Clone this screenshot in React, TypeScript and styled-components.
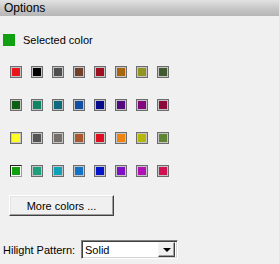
import React from "react";
import styled, { createGlobalStyle } from "styled-components";

const Global = createGlobalStyle`
  html, body { margin: 0; padding: 0; background: #f0f0f0; }
`;

const SWATCHES = [
  ["#e8161c", "#000000", "#4e4e4e", "#70402a", "#9c1022", "#a8640e", "#8f9422", "#405a30"],
  ["#0e5e12", "#128466", "#0e6a7c", "#1050a4", "#060c8c", "#520a7e", "#82087e", "#8c0a3a"],
  ["#ffff22", "#545454", "#76706a", "#a8582c", "#dc1020", "#ee8412", "#b4b80a", "#5e8434"],
  ["#10a010", "#1ea07e", "#10a2b8", "#1272c8", "#0414cc", "#8010c6", "#b012b8", "#d01050"],
];

/* 外框 */
const Panel = styled.div`
  width: 280px;
  height: 264px;
  background: #f0f0f0;
  font-family: "Liberation Sans", Arial, sans-serif;
  font-size: 11px;
  color: #000;
  box-sizing: border-box;
  border-right: 1px solid #e6e6e6;
  overflow: hidden;
`;

const Header = styled.div`
  height: 16px;
  line-height: 16px;
  padding-left: 4px;
  font-size: 12px;
  background: linear-gradient(180deg, #e2e2e2 0%, #c6c6c6 55%, #b6b6b6 100%);
`;

const SelectedRow = styled.div`
  display: flex;
  align-items: center;
  gap: 8px;
  margin: 18px 0 0 3px;
  height: 12px;
`;

const SelectedBox = styled.div<{ $c: string }>`
  width: 12px;
  height: 12px;
  background: ${(p) => p.$c};
`;

const Grid = styled.div`
  display: grid;
  grid-template-columns: repeat(8, 12px);
  column-gap: 9px;
  row-gap: 21px;
  margin: 20px 0 0 10px;
`;

const Swatch = styled.div<{ $c: string; $sel?: boolean }>`
  width: 12px;
  height: 12px;
  box-sizing: border-box;
  background: ${(p) => p.$c};
  border: 1px solid #6c6c6c;
  border-color: ${(p) => (p.$sel ? "#202020 #9a9a9a #9a9a9a #202020" : "#6c6c6c")};
  box-shadow: inset 0 0 0 1px ${(p) => (p.$sel ? "#ffffff" : "#c4c4c4")};
`;

const Button = styled.button`
  all: unset;
  display: flex;
  align-items: center;
  justify-content: center;
  box-sizing: border-box;
  width: 105px;
  height: 21px;
  margin: 18px 0 0 9px;
  font-size: 11px;
  background: #f0f0f0;
  border: 1px solid;
  border-color: #ffffff #404040 #404040 #ffffff;
  box-shadow: inset -1px -1px 0 #a0a0a0, inset 1px 1px 0 #e4e4e4;
`;

const PatternRow = styled.div`
  display: flex;
  align-items: center;
  margin: 24px 0 0 3px;
`;

const Label = styled.span`
  width: 78px;
`;

const Select = styled.div`
  box-sizing: border-box;
  width: 97px;
  height: 19px;
  display: flex;
  align-items: center;
  background: #fff;
  border: 1px solid;
  border-color: #808080 #ffffff #ffffff #808080;
  box-shadow: inset 1px 1px 0 #404040, inset -1px -1px 0 #d4d4d4;
  padding: 2px 2px 2px 3px;
`;

const Value = styled.span`
  flex: 1;
`;

const Arrow = styled.div`
  box-sizing: border-box;
  width: 17px;
  height: 15px;
  display: flex;
  align-items: center;
  justify-content: center;
  background: #f0f0f0;
  border: 1px solid;
  border-color: #f4f4f4 #404040 #404040 #f4f4f4;
  box-shadow: inset -1px -1px 0 #a0a0a0;
  &::after {
    content: "";
    border-left: 4px solid transparent;
    border-right: 4px solid transparent;
    border-top: 4px solid #000;
  }
`;

export default function App() {
  return (
    <>
      <Global />
      <Panel>
        <Header>Options</Header>
        <SelectedRow>
          <SelectedBox $c="#10a010" />
          <span>Selected color</span>
        </SelectedRow>
        <Grid>
          {SWATCHES.flatMap((row, r) =>
            row.map((c, i) => <Swatch key={r + "-" + i} $c={c} $sel={r === 3 && i === 0} />)
          )}
        </Grid>
        <Button>More colors ...</Button>
        <PatternRow>
          <Label>Hilight Pattern:</Label>
          <Select>
            <Value>Solid</Value>
            <Arrow />
          </Select>
        </PatternRow>
      </Panel>
    </>
  );
}
